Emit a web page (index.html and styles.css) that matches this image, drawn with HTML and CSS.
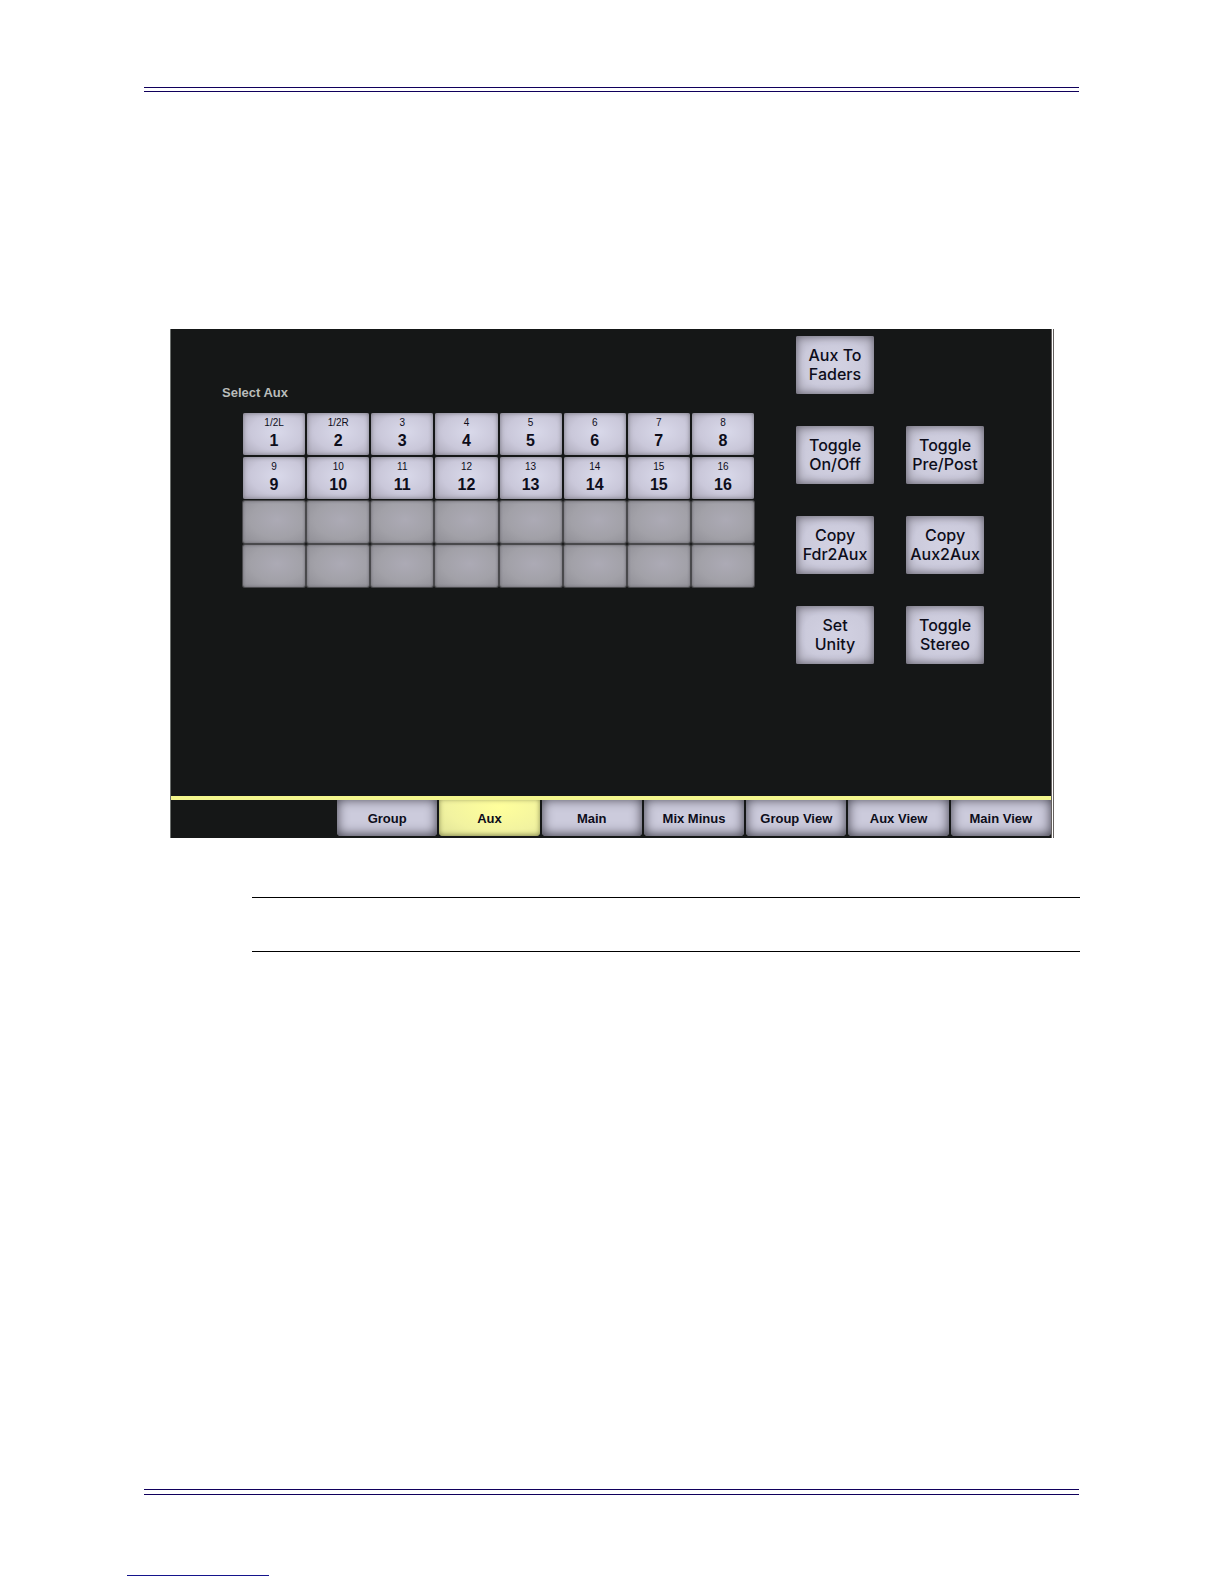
FILE: index.html
```html
<!DOCTYPE html>
<html lang="en">
<head>
    <meta charset="UTF-8">
    <meta name="viewport" content="width=device-width, initial-scale=1.0">
    <title>Select Aux</title>
    <link rel="stylesheet" href="styles.css">
</head>
<body>
    <div class="page">
        <header class="double-rule"></header>

        <main>
            <section class="screen">
                <div class="screen-body">
                    <div class="aux">
                        <h1 id="aux-title">Select Aux</h1>
                        <div class="aux-grid" role="group" aria-labelledby="aux-title">
                            <button><small>1/2L</small><b>1</b></button>
                            <button><small>1/2R</small><b>2</b></button>
                            <button><small>3</small><b>3</b></button>
                            <button><small>4</small><b>4</b></button>
                            <button><small>5</small><b>5</b></button>
                            <button><small>6</small><b>6</b></button>
                            <button><small>7</small><b>7</b></button>
                            <button><small>8</small><b>8</b></button>
                            <button><small>9</small><b>9</b></button>
                            <button><small>10</small><b>10</b></button>
                            <button><small>11</small><b>11</b></button>
                            <button><small>12</small><b>12</b></button>
                            <button><small>13</small><b>13</b></button>
                            <button><small>14</small><b>14</b></button>
                            <button><small>15</small><b>15</b></button>
                            <button><small>16</small><b>16</b></button>
                            <!-- unused auxes -->
                            <button disabled></button>
                            <button disabled></button>
                            <button disabled></button>
                            <button disabled></button>
                            <button disabled></button>
                            <button disabled></button>
                            <button disabled></button>
                            <button disabled></button>
                            <button disabled></button>
                            <button disabled></button>
                            <button disabled></button>
                            <button disabled></button>
                            <button disabled></button>
                            <button disabled></button>
                            <button disabled></button>
                            <button disabled></button>
                        </div>
                    </div>

                    <div class="actions">
                        <button class="first">Aux To<br>Faders</button>
                        <button>Toggle<br>On/Off</button>
                        <button>Toggle<br>Pre/Post</button>
                        <button>Copy<br>Fdr2Aux</button>
                        <button>Copy<br>Aux2Aux</button>
                        <button>Set<br>Unity</button>
                        <button>Toggle<br>Stereo</button>
                    </div>
                </div>

                <nav class="tabs">
                    <button>Group</button>
                    <button class="active">Aux</button>
                    <button>Main</button>
                    <button>Mix Minus</button>
                    <button>Group View</button>
                    <button>Aux View</button>
                    <button>Main View</button>
                </nav>
            </section>

            <div class="note"></div>
        </main>

        <footer>
            <div class="double-rule bottom"></div>
            <div class="link-rule"></div>
        </footer>
    </div>
</body>
</html>
```

FILE: styles.css
```css
* {
    box-sizing: border-box;
}
body {
    margin: 0;
    background-color: #fff;
    font-family: "Liberation Sans", Arial, sans-serif;
}
.page {
    display: flex;
    flex-direction: column;
    min-height: 100vh;
    padding: 87px 145px 8px 144px;
}
.double-rule {
    height: 5px;
    border: 1px solid #10005c;
    border-width: 1px 0;
}
.double-rule.bottom {
    height: 6px;
}
button {
    border: none;
    padding: 0;
    color: #0d0d1a;
    font-family: inherit;
    font-weight: bold;
    cursor: pointer;
}

/* console screen */
.screen {
    margin: 237px 25px 0 26px;
    background-color: #151717;
    background-clip: padding-box;
    border-left: 1px solid #6c706e;
    border-right: 3px double #65615f;
}
.screen-body {
    display: flex;
    align-items: flex-start;
    gap: 42px;
    height: 467px;
    padding: 7px 67px 0 51px;
}
.aux {
    flex: 1;
}
.aux h1 {
    margin: 48px 0 12px;
    color: #b9bcba;
    font-size: 13px;
    line-height: 17px;
}
.aux-grid {
    display: grid;
    grid-template-columns: repeat(8, 1fr);
    grid-auto-rows: 42px;
    gap: 2px;
    margin-left: 21px;
}
.aux-grid button {
    display: flex;
    flex-direction: column;
    align-items: center;
    border-radius: 2px;
    padding-top: 3px;
    background: radial-gradient(ellipse at 55% 45%, #d9d9ea 0%, #cac8da 55%, #aaa7b7 100%);
    box-shadow: inset 0 0 4px #77757f;
}
.aux-grid button:disabled {
    background: radial-gradient(ellipse at 55% 45%, #acaab5 0%, #a2a1a8 55%, #8f8e95 100%);
    box-shadow: inset 0 0 3px #66656b, 0 0 0 1px #49494c;
    cursor: default;
}
.aux-grid small {
    font-size: 10px;
    font-weight: normal;
    line-height: 14px;
}
.aux-grid b {
    font-size: 16px;
    line-height: 22px;
}

.actions {
    display: grid;
    grid-template-columns: 78px 78px;
    grid-auto-rows: 58px;
    gap: 32px;
}
.actions .first {
    grid-row: 1;
    grid-column: 1;
}
.actions button:nth-child(2) {
    grid-column: 1;
}
.actions button {
    border-radius: 2px;
    background: radial-gradient(ellipse at center, #d3d2e3 0%, #cbcadb 60%, #aeacbb 100%);
    box-shadow: inset 0 0 8px #605e6a;
    font-family: Inter, "Liberation Sans", sans-serif;
    font-size: 16px;
    font-weight: 500;
    line-height: 19px;
}

.tabs {
    display: grid;
    grid-template-columns: repeat(7, 1fr);
    gap: 2px;
    padding: 0 0 2px 166px;
    border-top: 4px solid #f3f58c;
}
.tabs button {
    height: 36px;
    border-radius: 0 0 4px 4px;
    background-color: #cccbdc;
    box-shadow: inset 0 -1px 12px #3c3a46;
    font-size: 13px;
}
.tabs .active {
    background: radial-gradient(ellipse at 60% 20%, #ffff9c 0%, #f2f3a0 60%, #dfe298 100%);
    box-shadow: inset 0 -1px 5px #878a4f;
}

.note {
    height: 55px;
    margin: 59px -1px 0 108px;
    border: 1px solid #000;
    border-width: 1px 0;
}

footer {
    margin-top: auto;
}
.link-rule {
    width: 142px;
    height: 1px;
    margin: 80px 0 0 -17px;
    background-color: #14148c;
}
```
